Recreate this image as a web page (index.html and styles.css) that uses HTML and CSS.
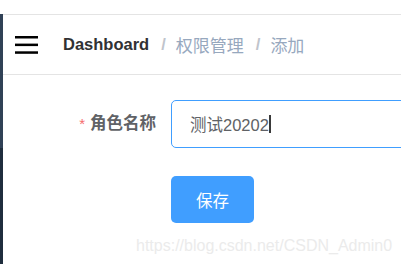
FILE: index.html
```html
<!DOCTYPE html>
<html lang="zh">
<head>
<meta charset="utf-8">
<link rel="stylesheet" href="styles.css">
</head>
<body>
<div class="page">
  <div class="topgap"></div>
  <div class="main">
    <div class="sidebar"></div>
    <div class="content">
      <div class="navbar">
        <div class="hamburger">
          <svg width="23" height="18" viewBox="0 0 23 18">
            <rect x="0" y="0" width="23" height="2.5" fill="#000"/>
            <rect x="0" y="7.6" width="23" height="2.5" fill="#000"/>
            <rect x="0" y="15.3" width="23" height="2.5" fill="#000"/>
          </svg>
        </div>
        <div class="breadcrumb">
          <span class="crumb crumb-home">Dashboard</span>
          <span class="sep">/</span>
          <span class="crumb">权限管理</span>
          <span class="sep">/</span>
          <span class="crumb">添加</span>
        </div>
      </div>
      <div class="form">
        <div class="form-item">
          <label class="label"><span class="star">*</span>角色名称</label>
          <div class="input">测试20202<span class="caret"></span></div>
        </div>
        <div class="form-actions">
          <button class="btn">保存</button>
        </div>
      </div>
    </div>
  </div>
  <div class="watermark">https://blog.csdn.net/CSDN_Admin0</div>
</div>
</body>
</html>
```

FILE: styles.css
```css
html, body {
  margin: 0;
  padding: 0;
  background: #fff;
  overflow: hidden;
}
.page {
  position: relative;
  width: 401px;
  height: 264px;
  overflow: hidden;
  font-family: "Liberation Sans", Arial, "Noto Sans CJK SC", sans-serif;
}
.topgap {
  height: 14px;
}
.main {
  display: flex;
  height: 250px;
}
.sidebar {
  width: 3px;
  flex: none;
  background: linear-gradient(#304156 0, #304156 134px, #1f2d3d 134px);
}
.content {
  flex: 1;
  min-width: 0;
}
.navbar {
  height: 59px;
  border-top: 1px solid #e4e4e4;
  border-bottom: 1px solid #e4e4e4;
  display: flex;
  align-items: center;
}
.hamburger {
  padding-left: 12px;
  display: flex;
  align-items: center;
  margin-top: 1px;
}
.breadcrumb {
  margin-left: 25px;
  font-size: 17px;
  display: flex;
  align-items: center;
  white-space: nowrap;
}
.crumb {
  color: #97a8be;
  font-family: "Liberation Sans", "Noto Sans CJK SC", sans-serif;
}
.crumb-home {
  color: #303133;
  font-weight: bold;
  font-size: 16.5px;
}
.sep {
  color: #c0c4cc;
  margin: 0 10px 0 12px;
  font-weight: bold;
  font-size: 16.5px;
}
.form {
  padding: 24px 0 0 73px;
}
.form-item {
  display: flex;
  align-items: center;
}
.label {
  width: 95px;
  flex: none;
  box-sizing: border-box;
  padding-right: 15px;
  text-align: right;
  font-size: 16.5px;
  font-weight: bold;
  color: #606266;
  line-height: 48px;
  white-space: nowrap;
  font-family: "Liberation Sans", "Noto Sans CJK SC", sans-serif;
}
.star {
  color: #f56c6c;
  margin-right: 5px;
  font-weight: normal;
  font-size: 15px;
}
.input {
  width: 300px;
  flex: none;
  height: 48px;
  box-sizing: border-box;
  border: 1px solid #409eff;
  border-radius: 5px;
  padding: 0 18px;
  display: flex;
  align-items: center;
  font-size: 16.5px;
  color: #606266;
  font-family: "Liberation Sans", "Noto Sans CJK SC", sans-serif;
}
.caret {
  display: inline-block;
  width: 2px;
  height: 18px;
  background: #3a3a3a;
  margin-left: 0;
}
.form-actions {
  padding: 28px 0 0 95px;
}
.btn {
  width: 83px;
  height: 47px;
  border: none;
  border-radius: 5px;
  background: #409eff;
  color: #fff;
  font-size: 16.5px;
  font-family: "Liberation Sans", "Noto Sans CJK SC", sans-serif;
  padding: 0;
  display: block;
}
.watermark {
  position: absolute;
  left: 136px;
  top: 237px;
  font-size: 16px;
  color: #ebebeb;
  white-space: nowrap;
  font-family: "Liberation Sans", Arial, sans-serif;
}
```
